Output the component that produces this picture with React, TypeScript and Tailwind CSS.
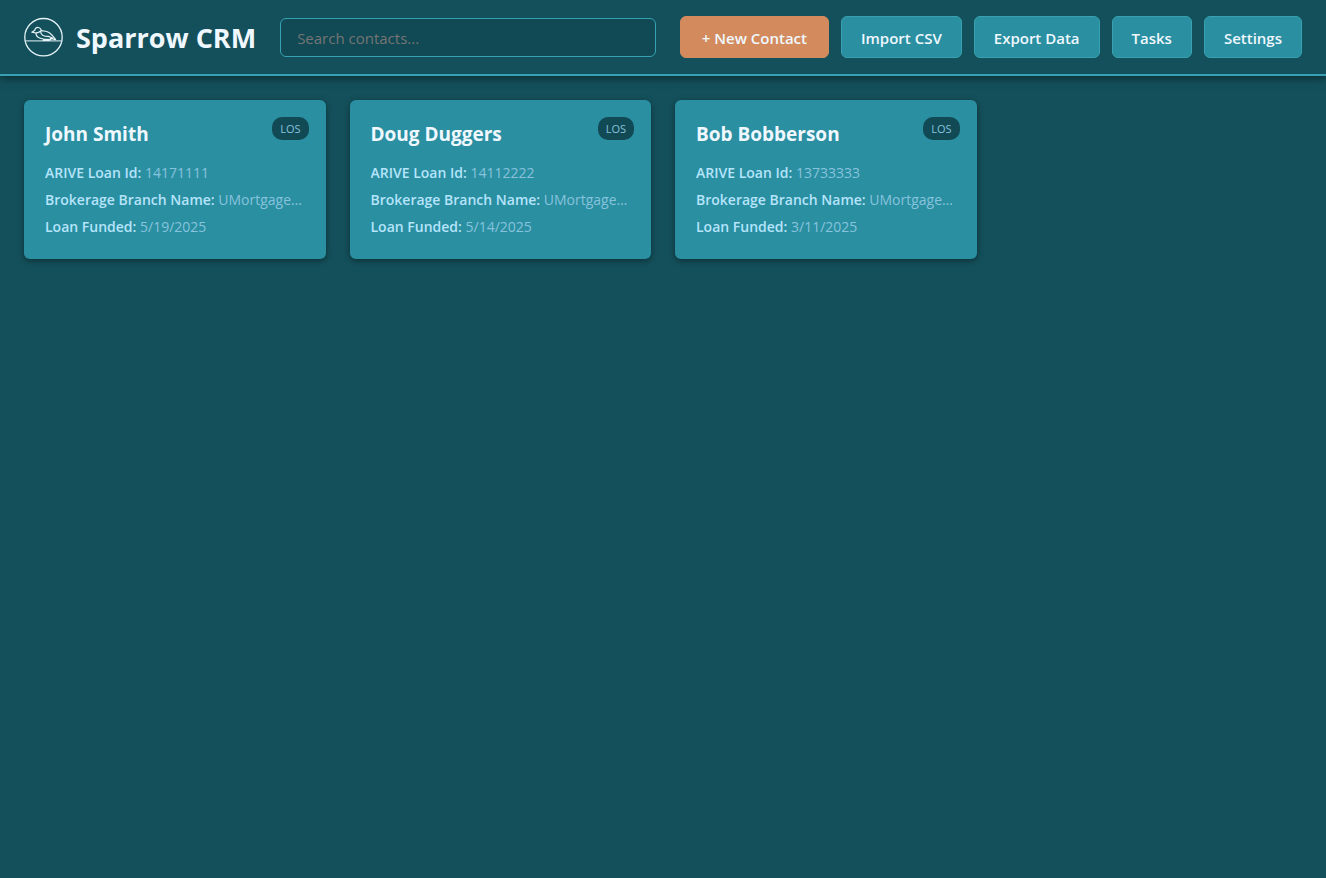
const contacts = [
  { name: "John Smith", loanId: "14171111", funded: "5/19/2025" },
  { name: "Doug Duggers", loanId: "14112222", funded: "5/14/2025" },
  { name: "Bob Bobberson", loanId: "13733333", funded: "3/11/2025" },
];

function Logo() {
  return (
    <svg
      viewBox="0 0 40 40"
      className="size-10 shrink-0"
      fill="none"
      stroke="#e6f4f8"
      strokeLinecap="round"
      strokeLinejoin="round"
      aria-hidden="true"
    >
      <circle cx="19.5" cy="20.2" r="18.7" strokeWidth="1.3" />
      <path d="M1.2 23.8H37.8" strokeWidth="1.3" stroke="#b9d4dc" />
      <path
        d="M7.8 15.2L10.8 13.2C11 11.2 12.6 10.3 14.3 10.5C16.2 10.8 17 12 17.4 13.7C20.6 14 23.8 14.6 26 16.2C28.4 18 30 20.4 31.6 22.6L26.4 21.4M7.8 15.2L11.8 16C12 18.6 14.6 21.4 19.4 22L26.8 22.6M19.6 22.4L19.2 23.4H25.4M16.8 15.2C17 17.8 20.2 19.4 24.4 19.4L28.6 21M17 13.8C15.6 15 13.6 16 11.8 15.8"
        strokeWidth="1.2"
      />
    </svg>
  );
}

function ActionButton({ label, primary = false }: { label: string; primary?: boolean }) {
  return (
    <button
      type="button"
      className={
        primary
          ? "h-[42px] cursor-pointer whitespace-nowrap rounded-md border border-[#d38b5d] bg-[#d38b5d] px-[21px] pt-0.5 text-[15px] font-[650]"
          : "h-[42px] cursor-pointer whitespace-nowrap rounded-md border border-[#38a1b1] bg-[#2a8fa1] px-[19px] pt-0.5 text-[15px] font-[650]"
      }
    >
      {label}
    </button>
  );
}

function Field({ label, value }: { label: string; value: string }) {
  return (
    <p className="truncate text-sm leading-[19px] text-[#87c3dd]">
      <strong className="font-[650] text-[#b5e4fb]">{label}:</strong> {value}
    </p>
  );
}

export default function App() {
  return (
    <div className="min-h-screen bg-[#14505b] font-['Open_Sans','Noto_Sans',sans-serif] text-[#f0f8ff]">
      <header className="flex items-center gap-6 border-b-2 border-[#38a1b1] px-6 py-4 shadow-[0_2px_8px_rgba(0,0,0,0.5)]">
        <div className="flex items-center gap-3">
          <Logo />
          <h1 className="whitespace-nowrap pt-0.5 text-[27px] leading-9 font-bold">Sparrow CRM</h1>
        </div>
        <input
          type="search"
          aria-label="Search contacts"
          placeholder="Search contacts..."
          className="h-[39px] min-w-0 flex-1 rounded-md border border-[#38a1b1] bg-[#114954] px-4 pt-0.5 text-[15px] outline-none placeholder:text-[#757575]"
        />
        <nav className="flex gap-3" aria-label="Actions">
          <ActionButton label="+ New Contact" primary />
          <ActionButton label="Import CSV" />
          <ActionButton label="Export Data" />
          <ActionButton label="Tasks" />
          <ActionButton label="Settings" />
        </nav>
      </header>
      <main className="grid grid-cols-[repeat(auto-fill,minmax(280px,1fr))] gap-6 p-6">
        {contacts.map((c) => (
          <article
            key={c.name}
            className="relative rounded-md bg-[#2a8fa1] px-[21px] pt-5 pb-[23px] shadow-[0_2px_6px_rgba(0,0,0,0.4)]"
          >
            <span className="absolute top-[17px] right-[17px] rounded-[10px] bg-[#114954] px-2 text-[11px] leading-[23px] text-[#87c3dd]">
              LOS
            </span>
            <h2 className="mb-[15px] text-[19px] leading-7 font-bold">{c.name}</h2>
            <div className="flex flex-col gap-2">
              <Field label="ARIVE Loan Id" value={c.loanId} />
              <Field label="Brokerage Branch Name" value="UMortgage LLC" />
              <Field label="Loan Funded" value={c.funded} />
            </div>
          </article>
        ))}
      </main>
    </div>
  );
}
